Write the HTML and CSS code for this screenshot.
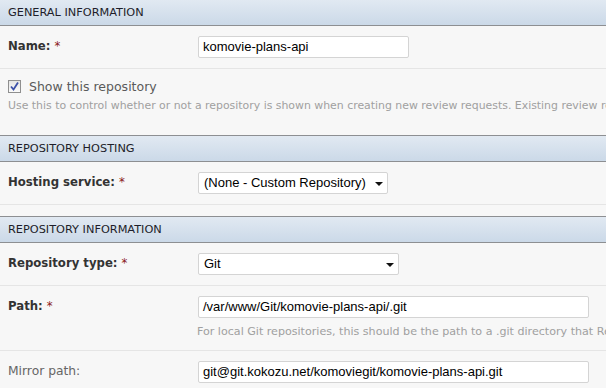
FILE: index.html
```html
<!DOCTYPE html>
<html>
<head>
<meta charset="utf-8">
<link rel="stylesheet" href="styles.css">
</head>
<body>
<div class="page">
  <section class="section">
    <h2 class="section-title">GENERAL INFORMATION</h2>
    <div class="row">
      <div class="row-main">
        <label class="label required">Name: <span class="star">*</span></label>
        <div class="input w210">komovie-plans-api</div>
      </div>
    </div>
    <div class="row row-check">
      <div class="check-line">
        <span class="checkbox">
          <svg width="11" height="11" viewBox="0 0 11 11"><path d="M2 5.5 L4.5 8.5 L9 1.5" fill="none" stroke="#3a4fa8" stroke-width="1.8"/></svg>
        </span>
        <span class="check-label">Show this repository</span>
      </div>
      <p class="help help-check">Use this to control whether or not a repository is shown when creating new review requests. Existing review requests are unaffected.</p>
    </div>
  </section>

  <section class="section">
    <h2 class="section-title bordered">REPOSITORY HOSTING</h2>
    <div class="row sep">
      <div class="row-main">
        <label class="label required">Hosting service: <span class="star">*</span></label>
        <div class="select w190"><span class="select-text">(None - Custom Repository)</span><span class="arrow"></span></div>
      </div>
    </div>
  </section>

  <section class="section">
    <h2 class="section-title bordered">REPOSITORY INFORMATION</h2>
    <div class="row sep">
      <div class="row-main">
        <label class="label required">Repository type: <span class="star">*</span></label>
        <div class="select w201"><span class="select-text">Git</span><span class="arrow"></span></div>
      </div>
    </div>
    <div class="row sep">
      <div class="row-main">
        <label class="label required">Path: <span class="star">*</span></label>
        <div class="field">
          <div class="input w391">/var/www/Git/komovie-plans-api/.git</div>
        </div>
      </div>
      <p class="help help-field">For local Git repositories, this should be the path to a .git directory that Review Board can read from.</p>
    </div>
    <div class="row">
      <div class="row-main">
        <label class="label plain">Mirror path:</label>
        <div class="input w391">git@git.kokozu.net/komoviegit/komovie-plans-api.git</div>
      </div>
    </div>
  </section>
</div>
</body>
</html>
```

FILE: styles.css
```css
html, body {
  margin: 0;
  padding: 0;
  background: #f7f7f7;
}
body {
  width: 606px;
  height: 388px;
  overflow: hidden;
  font-family: "DejaVu Sans", Verdana, sans-serif;
}
.page {
  display: flex;
  flex-direction: column;
  width: 606px;
}
.section {
  display: flex;
  flex-direction: column;
}
.section-title {
  margin: 0;
  height: 25px;
  line-height: 25px;
  padding-left: 8px;
  font-weight: normal;
  font-size: 11.3px;
  color: #1e1e2a;
  background: linear-gradient(#e1e9f2, #cbd9e8);
  border-bottom: 1px solid #8d8f92;
  white-space: nowrap;
}
.section-title.bordered {
  border-top: 1px solid #8d8f92;
}
.row {
  padding: 10px 0 10px 8px;
  white-space: nowrap;
  overflow: hidden;
}
.row.sep {
  border-bottom: 1px solid #e5e5e5;
}
.section:nth-child(1) .row:first-of-type {
  border-bottom: 1px solid #e5e5e5;
}
.section:nth-child(2) {
  padding-bottom: 11px;
}
.row-main {
  display: flex;
  align-items: center;
  height: 22px;
}
.label {
  width: 190px;
  flex: none;
  font-size: 11.7px;
  color: #333;
  margin-top: -3px;
}
.label.required {
  font-weight: bold;
}
.label.plain {
  font-size: 12.3px;
  color: #666;
  margin-top: -2px;
}
.star {
  color: #8b1a1a;
  font-weight: normal;
}
.input, .select {
  box-sizing: border-box;
  height: 22px;
  background: #fff;
  border: 1px solid #d4d4d4;
  border-radius: 2px;
  font-family: "Liberation Sans", Arial, sans-serif;
  font-size: 13px;
  color: #000;
  line-height: 20px;
  padding-left: 4px;
  flex: none;
}
.w210 { width: 211px; }
.w190 { width: 190px; }
.w201 { width: 201px; }
.w391 { width: 391px; }
.select {
  display: flex;
  align-items: center;
  justify-content: space-between;
  padding-left: 5px;
  padding-right: 4px;
}
.arrow {
  width: 0;
  height: 0;
  border-left: 4px solid transparent;
  border-right: 4px solid transparent;
  border-top: 4px solid #111;
  margin-top: 1px;
}
.row-check {
  padding-top: 10px;
  padding-bottom: 21px;
}
.check-line {
  display: flex;
  align-items: center;
  height: 14px;
}
.checkbox {
  box-sizing: border-box;
  width: 13px;
  height: 13px;
  border: 1px solid #8f8f8f;
  background: linear-gradient(#e4e4e4, #fafafa);
  display: flex;
  align-items: center;
  justify-content: center;
  margin-right: 8px;
}
.check-label {
  font-size: 12.5px;
  color: #5a5a5a;
}
.help {
  margin: 0;
  font-size: 10.9px;
  color: #a0a0a0;
  white-space: nowrap;
}
.help-check {
  margin-top: 5px;
  line-height: 16px;
}
.help-field {
  margin-top: 5px;
  line-height: 17px;
  padding-left: 189px;
  font-size: 11.1px;
}
```
